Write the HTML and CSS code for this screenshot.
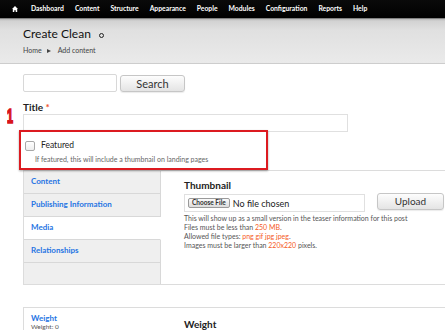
FILE: index.html
```html
<!DOCTYPE html>
<html lang="en">
<head>
<meta charset="utf-8">
<title>Create Clean</title>
<link rel="stylesheet" href="styles.css">
</head>
<body>
<nav class="toolbar">
  <span class="home"><svg width="6" height="6" viewBox="0 0 6 6"><path d="M3 0 L6 3 L5.2 3 L5.2 6 L3.7 6 L3.7 4.2 L2.3 4.2 L2.3 6 L0.8 6 L0.8 3 L0 3 Z" fill="#fff"/></svg></span>
  <a class="nav-link">Dashboard</a>
  <a class="nav-link">Content</a>
  <a class="nav-link">Structure</a>
  <a class="nav-link">Appearance</a>
  <a class="nav-link">People</a>
  <a class="nav-link">Modules</a>
  <a class="nav-link">Configuration</a>
  <a class="nav-link">Reports</a>
  <a class="nav-link">Help</a>
</nav>
<header class="page-header">
  <h1 class="page-title">Create Clean <span class="ring"></span></h1>
  <div class="breadcrumb"><a>Home</a><span class="sep"></span><a>Add content</a></div>
</header>
<main class="content">
  <div class="search">
    <input class="search-input" type="text">
    <button class="btn search-btn" type="button">Search</button>
  </div>
  <div class="field title-field">
    <span class="annot">1</span>
    <label class="label">Title <span class="req">*</span></label>
    <input class="text-input title-input" type="text">
  </div>
  <div class="featured">
    <label class="check"><span class="box"></span>Featured</label>
    <div class="desc">If featured, this will include a thumbnail on landing pages</div>
  </div>
  <div class="vtabs">
    <ul class="vtab-list">
      <li class="vtab"><a>Content</a></li>
      <li class="vtab"><a>Publishing Information</a></li>
      <li class="vtab active"><a>Media</a></li>
      <li class="vtab"><a>Relationships</a></li>
      <li class="vtab filler"></li>
    </ul>
    <div class="vtab-pane">
      <div class="label pane-label">Thumbnail</div>
      <div class="file-row">
        <div class="file-input"><span class="choose">Choose File</span><span class="nofile">No file chosen</span></div>
        <button class="btn upload-btn" type="button">Upload</button>
      </div>
      <div class="file-desc">
        <div>This will show up as a small version in the teaser information for this post</div>
        <div>Files must be less than <strong class="hl">250 MB</strong>.</div>
        <div>Allowed file types: <strong class="hl">png gif jpg jpeg</strong>.</div>
        <div>Images must be larger than <strong class="hl">220x220</strong> pixels.</div>
      </div>
    </div>
  </div>
  <div class="vtabs second">
    <ul class="vtab-list">
      <li class="vtab active"><a>Weight</a><div class="summary">Weight: 0</div></li>
    </ul>
    <div class="vtab-pane pane-second">
      <div class="label pane-label">Weight</div>
      <div class="weight-input"></div>
    </div>
  </div>
</main>
</body>
</html>
```

FILE: styles.css
```css
html, body {
  margin: 0;
  padding: 0;
  overflow: hidden;
  background: #fff;
}
body {
  font-family: Lato, "Open Sans", sans-serif;
  color: #333;
  width: 445px;
  height: 330px;
}
a { color: inherit; text-decoration: none; }

.toolbar {
  display: flex;
  align-items: center;
  gap: 11px;
  height: 18px;
  padding-left: 12px;
  background: linear-gradient(#0a0a0a, #000);
  box-sizing: border-box;
}
.home { display: flex; width: 7px; margin-right: 1px; }
.nav-link {
  color: #fff;
  font-weight: 700;
  font-size: 6.8px;
  line-height: 16px;
  padding-bottom: 2px;
}

.page-header {
  padding: 9px 0 8px 23px;
  background: linear-gradient(#4a4a4a 0, #b8b8b8 1px, #d2d2d2 3px, #e0e0e0 12px, #eaeaea 100%);
  border-bottom: 1px solid #cdcdcd;
}
.page-title {
  margin: 0;
  font-size: 12px;
  font-weight: 400;
  line-height: 14px;
  color: #111;
  display: flex;
  align-items: center;
}
.ring {
  display: inline-block;
  width: 3px;
  height: 3px;
  border: 1.5px solid #222;
  border-radius: 50%;
  margin-left: 8px;
  margin-top: 2px;
}
.breadcrumb {
  margin-top: 5px;
  font-size: 7px;
  line-height: 9px;
  color: #444;
  display: flex;
  align-items: center;
}
.sep {
  display: inline-block;
  width: 0;
  height: 0;
  border-left: 4px solid #444;
  border-top: 2px solid transparent;
  border-bottom: 2px solid transparent;
  margin: 0 7px 0 5px;
}

.content {
  padding: 10px 0 0 23px;
}
.search {
  display: flex;
  align-items: flex-start;
  gap: 3px;
}
.search-input {
  width: 94px;
  height: 18px;
  box-sizing: border-box;
  border: 1px solid #d8d8d8;
  border-radius: 2px;
  margin: 0;
  padding: 0;
}
.btn {
  font-family: Lato, "Open Sans", sans-serif;
  color: #333;
  background: linear-gradient(#fdfdfd, #e4e4e4);
  border: 1px solid #c6c6c6;
  border-radius: 3px;
  box-sizing: border-box;
  padding: 0;
  margin: 0;
  box-shadow: 0 1px 1px rgba(0,0,0,0.08);
}
.search-btn {
  width: 65px;
  height: 17px;
  margin-top: 1px;
  font-size: 11px;
  line-height: 15px;
}

.title-field {
  position: relative;
  margin-top: 9px;
}
.label {
  display: block;
  font-weight: 700;
  font-size: 10px;
  line-height: 12px;
  color: #222;
}
.req { color: #f0502a; }
.text-input {
  display: block;
  box-sizing: border-box;
  border: 1px solid #e0e0e0;
  margin: 1px 0 0;
  padding: 0;
}
.title-input { width: 325px; height: 18px; }
.annot {
  position: absolute;
  left: -16px;
  top: 6px;
  font-family: "Liberation Sans", sans-serif;
  font-weight: 700;
  font-size: 18px;
  line-height: 18px;
  color: #d8141c;
  -webkit-text-stroke: 1.6px #d8141c;
  transform: scale(0.6, 1.08);
  transform-origin: left top;
}

.featured {
  position: relative;
  width: 245px;
  margin-top: 8px;
}
.featured::after {
  content: "";
  position: absolute;
  left: -4px;
  right: 0;
  top: -10px;
  bottom: -6px;
  border: 2px solid #dc1a20;
  box-shadow: 0 1px 2px rgba(0,0,0,0.35);
  pointer-events: none;
}
.check {
  display: flex;
  align-items: center;
  font-size: 8.5px;
  line-height: 11px;
  color: #222;
  padding-left: 2px;
}
.box {
  width: 8px;
  height: 8px;
  border: 1px solid #a8a8a8;
  border-radius: 2px;
  background: linear-gradient(#fff, #eee);
  margin-right: 6px;
}
.desc {
  margin-top: 4px;
  padding-left: 12px;
  font-size: 7px;
  line-height: 9px;
  color: #666;
}

.vtabs {
  display: flex;
  margin-top: 6px;
  border-top: 1px solid #dcdcdc;
  border-bottom: 1px solid #dcdcdc;
  border-left: 1px solid #dcdcdc;
}
.vtab-list {
  list-style: none;
  margin: 0;
  padding: 0;
  width: 137px;
  flex: none;
  background: #efefef;
}
.vtab {
  box-sizing: border-box;
  height: 23px;
  padding: 5px 0 0 7px;
  border-bottom: 1px solid #d8d8d8;
  border-right: 1px solid #d8d8d8;
  font-size: 8px;
  font-weight: 700;
  line-height: 10px;
  color: #2675e3;
}
.vtab.active {
  background: #fff;
  border-right-color: #fff;
}
.vtab.filler { height: 21px; border-bottom: none; }
.vtab-pane {
  flex: 1;
  padding: 8px 0 0 23px;
  background: #fff;
}
.file-row {
  display: flex;
  align-items: flex-start;
  gap: 12px;
  margin-top: 3px;
}
.file-input {
  width: 181px;
  height: 18px;
  box-sizing: border-box;
  border: 1px solid #e0e0e0;
  display: flex;
  align-items: center;
  padding-left: 3px;
}
.choose {
  box-sizing: border-box;
  height: 10px;
  padding: 0 3px;
  font-size: 6.5px;
  font-weight: 700;
  line-height: 8px;
  color: #333;
  border: 1px solid #9a9a9a;
  border-radius: 2px;
  background: linear-gradient(#fafafa, #dcdcdc);
  margin-right: 3px;
}
.nofile {
  font-size: 9px;
  color: #222;
}
.upload-btn {
  width: 67px;
  height: 17px;
  margin-top: -1px;
  font-size: 10px;
  line-height: 15px;
}
.file-desc {
  margin-top: 2px;
  font-size: 7px;
  line-height: 9px;
  color: #555;
}
.hl { color: #f55a1c; font-weight: 400; }

.second {
  margin-top: 22px;
  border-bottom: none;
}
.second .vtab {
  height: auto;
  border: none;
  font-size: 8px;
}
.summary {
  font-weight: 400;
  font-size: 6.5px;
  line-height: 8px;
  color: #555;
}
.pane-second { padding-top: 10px; }
.weight-input {
  width: 114px;
  height: 10px;
  border: 1px solid #e0e0e0;
  margin-top: 2px;
}
```
